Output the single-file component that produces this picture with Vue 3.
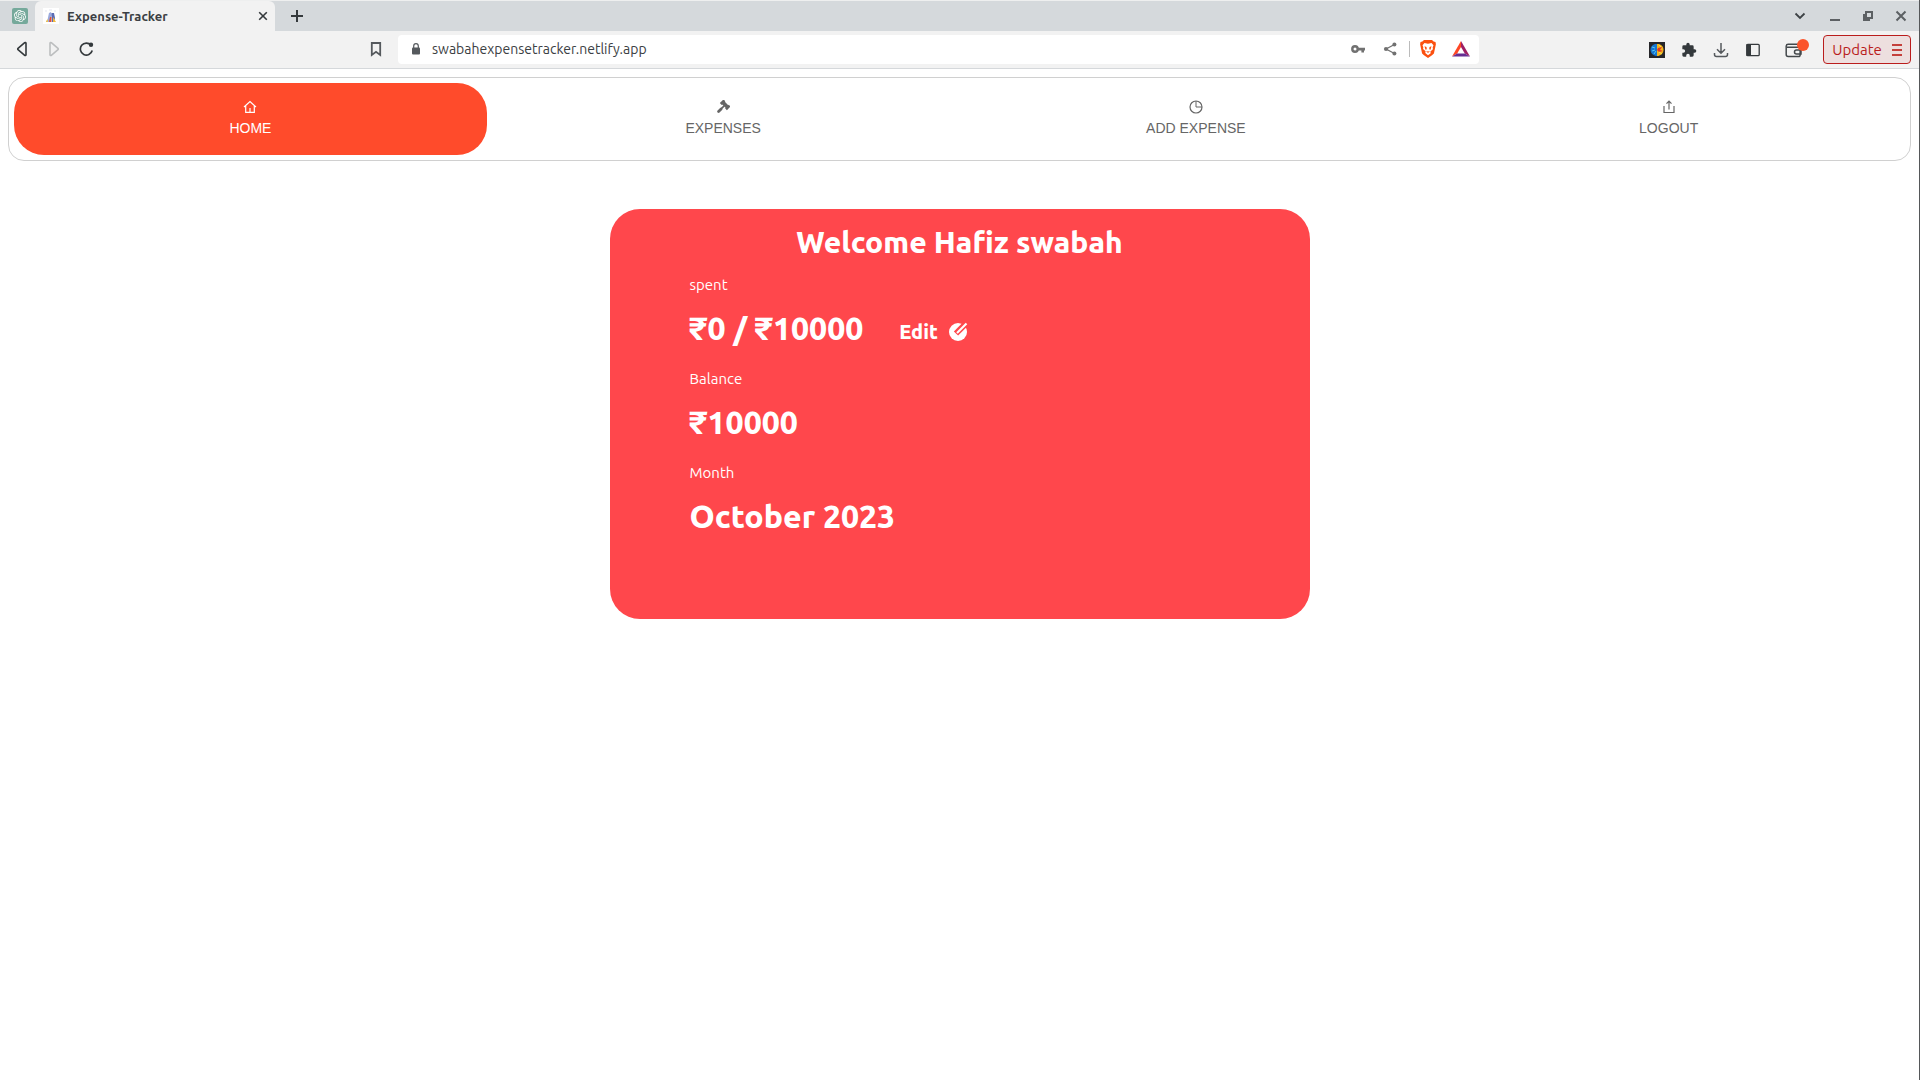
<script setup>
import { ref } from 'vue'

const active = ref('HOME')
const links = [
  { label: 'HOME', icon: 'home' },
  { label: 'EXPENSES', icon: 'gavel' },
  { label: 'ADD EXPENSE', icon: 'pie' },
  { label: 'LOGOUT', icon: 'upload' },
]
</script>

<template>
  <div class="window">
    <header class="tabstrip">
      <button class="pinned" aria-label="Pinned tab">
        <svg width="16" height="16" viewBox="-4 -4 32 32">
          <rect x="-4" y="-4" width="32" height="32" rx="4" fill="#75a99b" />
          <path fill="#fff" d="M22.2819 9.8211a5.9847 5.9847 0 0 0-.5157-4.9108 6.0462 6.0462 0 0 0-6.5098-2.9A6.0651 6.0651 0 0 0 4.9807 4.1818a5.9847 5.9847 0 0 0-3.9977 2.9 6.0462 6.0462 0 0 0 .7427 7.0966 5.98 5.98 0 0 0 .511 4.9107 6.051 6.051 0 0 0 6.5146 2.9001A5.9847 5.9847 0 0 0 13.2599 24a6.0557 6.0557 0 0 0 5.7718-4.2058 5.9894 5.9894 0 0 0 3.9977-2.9001 6.0557 6.0557 0 0 0-.7475-7.0729zm-9.022 12.6081a4.4755 4.4755 0 0 1-2.8764-1.0408l.1419-.0804 4.7783-2.7582a.7948.7948 0 0 0 .3927-.6813v-6.7369l2.02 1.1686a.071.071 0 0 1 .038.052v5.5826a4.504 4.504 0 0 1-4.4945 4.4944zm-9.6607-4.1254a4.4708 4.4708 0 0 1-.5346-3.0137l.142.0852 4.783 2.7582a.7712.7712 0 0 0 .7806 0l5.8428-3.3685v2.3324a.0804.0804 0 0 1-.0332.0615L9.74 19.9502a4.4992 4.4992 0 0 1-6.1408-1.6464zM2.3408 7.8956a4.485 4.485 0 0 1 2.3655-1.9728V11.6a.7664.7664 0 0 0 .3879.6765l5.8144 3.3543-2.0201 1.1685a.0757.0757 0 0 1-.071 0l-4.8303-2.7865A4.504 4.504 0 0 1 2.3408 7.872zm16.5963 3.8558L13.1038 8.364 15.1192 7.2a.0757.0757 0 0 1 .071 0l4.8303 2.7913a4.4944 4.4944 0 0 1-.6765 8.1042v-5.6772a.79.79 0 0 0-.407-.667zm2.0107-3.0231l-.142-.0852-4.7735-2.7818a.7759.7759 0 0 0-.7854 0L9.409 9.2297V6.8974a.0662.0662 0 0 1 .0284-.0615l4.8303-2.7866a4.4992 4.4992 0 0 1 6.6802 4.66zM8.3065 12.863l-2.02-1.1638a.0804.0804 0 0 1-.038-.0567V6.0742a4.4992 4.4992 0 0 1 7.3757-3.4537l-.142.0805L8.704 5.459a.7948.7948 0 0 0-.3927.6813zm1.0976-2.3654l2.602-1.4998 2.6069 1.4998v2.9994l-2.5974 1.4997-2.6067-1.4997Z" />
        </svg>
      </button>
      <div class="tab">
        <svg width="16" height="16" viewBox="0 0 16 16">
          <rect width="16" height="16" fill="#fff" />
          <path d="M6 5l2-1 1 3-2 7H4z" fill="#9aa9dc" />
          <path d="M8.500 5H11l1 5-1 4H9z" fill="#5a6bb5" />
          <path d="M7 9h1.500v5H6z" fill="#d9523f" />
          <path d="M10 9l3 5h-3z" fill="#f0b93a" />
          <path d="M3 13l2-2v3H3z" fill="#e8c15a" />
          <path d="M2 3h2M6 2h3M11 3h2" stroke="#e3e5ee" />
        </svg>
        <span class="tab-title">Expense-Tracker</span>
        <button aria-label="Close tab">
          <svg width="10" height="10" viewBox="0 0 10 10"><path d="M1.2 1.2l7.6 7.6M8.8 1.2L1.2 8.8" stroke="#34393c" stroke-width="1.6" /></svg>
        </button>
      </div>
      <button class="new-tab" aria-label="New tab">
        <svg width="12" height="12" viewBox="0 0 12 12"><path d="M6 0v12M0 6h12" stroke="#34393c" stroke-width="2" /></svg>
      </button>
      <div class="controls">
        <button class="search-tabs" aria-label="Search tabs">
          <svg width="12" height="12" viewBox="0 0 12 12"><path d="M1.5 3.500L6 8l4.500-4.500" fill="none" stroke="#3d4245" stroke-width="1.800" /></svg>
        </button>
        <button aria-label="Minimize">
          <svg width="12" height="12" viewBox="0 0 12 12"><path d="M1 10h10" stroke="#5c6063" stroke-width="2" /></svg>
        </button>
        <button aria-label="Restore">
          <svg width="12" height="12" viewBox="0 0 12 12"><path d="M4 2h6v6H4zM2 4v6h6" fill="none" stroke="#5c6063" stroke-width="2" /></svg>
        </button>
        <button aria-label="Close">
          <svg width="12" height="12" viewBox="0 0 12 12"><path d="M1.500 1.500l9 9M10.500 1.500l-9 9" stroke="#5c6063" stroke-width="2" /></svg>
        </button>
      </div>
    </header>

    <div class="toolbar">
      <div class="nav-tools">
        <button aria-label="Back">
          <svg width="14" height="16" viewBox="0 0 14 16"><path d="M11 2.200v11.600a.8.8 0 0 1-1.300.5L3 8.600a.8.800 0 0 1 0-1.200l6.700-5.700a.8.8 0 0 1 1.300.5z" fill="none" stroke="#34393c" stroke-width="1.600" /></svg>
        </button>
        <button aria-label="Forward">
          <svg width="14" height="16" viewBox="0 0 14 16"><path d="M3 2.200v11.600a.8.8 0 0 0 1.300.5L11 8.600a.8.800 0 0 0 0-1.200L4.300 1.700A.8.8 0 0 0 3 2.200z" fill="none" stroke="#bcbebf" stroke-width="1.600" /></svg>
        </button>
        <button aria-label="Reload">
          <svg width="16" height="16" viewBox="0 0 16 16"><path d="M12 4.200A6 6 0 1 0 13.200 9.500" fill="none" stroke="#34393c" stroke-width="1.700" /><circle cx="12" cy="3.800" r="2.200" fill="#34393c" /></svg>
        </button>
        <button class="bookmark" aria-label="Bookmark">
          <svg width="12" height="16" viewBox="0 0 12 16"><path d="M1.800 2h8.400v12L6 10.800 1.800 14z" fill="none" stroke="#55595d" stroke-width="1.800" /></svg>
        </button>
      </div>
      <div class="address">
        <svg width="10" height="12" viewBox="0 0 10 12"><rect x="1" y="4.500" width="8" height="7" rx="1" fill="#55595d" /><path d="M2.700 5V3a2.300 2.300 0 0 1 4.600 0v2" fill="none" stroke="#55595d" stroke-width="1.200" /></svg>
        <input aria-label="Address" value="swabahexpensetracker.netlify.app" />
        <button aria-label="Saved passwords">
          <svg width="16" height="16" viewBox="0 0 16 16"><circle cx="4" cy="8" r="2.700" fill="none" stroke="#717171" stroke-width="2.400" /><path d="M7 6.700h7v2.800h-1V11.600h-2.600V9.500H7z" fill="#717171" /></svg>
        </button>
        <button aria-label="Share">
          <svg width="16" height="16" viewBox="0 0 16 16"><path d="M12.500 3.500L4 8l8.500 4.500" fill="none" stroke="#717171" stroke-width="1.300" /><g fill="#717171"><circle cx="12.400" cy="3.600" r="2" /><circle cx="4" cy="8" r="2.100" /><circle cx="12.400" cy="12.400" r="2" /></g></svg>
        </button>
        <span class="divider"></span>
        <button aria-label="Shields">
          <svg width="18" height="18" viewBox="0 0 18 18"><path d="M5 0h8l1.600 1.400 1.900.6.400 2.200-2 9.300L13 15.200 9 18l-4-2.800-1.900-1.700-2-9.300L1.500 2l1.900-.6z" fill="#fb5010" /><path d="M5.500 3L9 3.700l3.500-.7 2 2.300-.8 1.900.2 2-2.500 2.300.3 1.700L9 15.200l-2.700-2.300.3-1.700-2.500-2.300.2-1.700-.8-1.900z" fill="#fff" /><path d="M5.500 6.300l2 .8.300 2.200-1.300.4zM12.500 6.300l-2 .8-.3 2.200 1.300.4zM7 11l2 .6 2-.6-2 2z" fill="#fb5010" /></svg>
        </button>
        <button aria-label="Rewards">
          <svg width="18" height="18" viewBox="0 0 18 18"><path d="M9 1L0 16.500l5.200-3L9 7z" fill="#ff4724" /><path d="M9 1l9 15.500-5.200-3L9 7z" fill="#9e1f63" /><path d="M0 16.500h18l-5.200-3H5.200z" fill="#662d91" /></svg>
        </button>
      </div>
      <div class="extensions">
        <button aria-label="Brain extension">
          <svg width="16" height="16" viewBox="0 0 16 16"><rect width="16" height="16" fill="#26262a" /><path d="M8 2C4.500 1.500 1.500 4 1.500 8c.2 3.500 3 6 6.500 6z" fill="#1675d1" /><path d="M8 2c3.500-.5 6.500 2 6.500 6-.2 3.500-3 6-6.500 6z" fill="#f6b51e" /><path d="M9 6l4-1-2 3 3 1-4 1-2-2z" fill="#df3427" /><path d="M3 5l3 1M3 9l3-1M5 12l2-3" stroke="#5cc8ef" /><path d="M10 10l3 2M10 3l2 2" stroke="#f2e34c" /></svg>
        </button>
        <button aria-label="Extensions">
          <svg width="16" height="16" viewBox="0 0 24 24"><path d="M20.500 11H19V7a2 2 0 0 0-2-2h-4V3.500a2.500 2.500 0 0 0-5 0V5H4a2 2 0 0 0-2 2v3.800h1.500a2.700 2.700 0 0 1 0 5.400H2V20a2 2 0 0 0 2 2h3.800v-1.500a2.700 2.700 0 0 1 5.400 0V22H17a2 2 0 0 0 2-2v-4h1.500a2.500 2.500 0 0 0 0-5z" fill="#34393c" /></svg>
        </button>
        <button aria-label="Downloads">
          <svg width="16" height="16" viewBox="0 0 16 16"><path d="M8 1v10M4 7.300l4 4 4-4M1.500 11v1.500a2 2 0 0 0 2 2h9a2 2 0 0 0 2-2V11" fill="none" stroke="#55595d" stroke-width="1.500" /></svg>
        </button>
        <button aria-label="Sidebar">
          <svg width="16" height="16" viewBox="0 0 16 16"><rect x="1.800" y="2.300" width="12.400" height="11.400" rx="1" fill="none" stroke="#34393c" stroke-width="1.300" /><path d="M1.500 2h4.500v12H1.500z" fill="#34393c" /></svg>
        </button>
        <button class="wallet" aria-label="Wallet">
          <svg width="18" height="16" viewBox="0 0 18 16"><path d="M15 5V3.500A1.300 1.300 0 0 0 13.700 2.200H3.200A2 2 0 0 0 1.200 4v8.500a2 2 0 0 0 2 2h10.600a1.300 1.300 0 0 0 1.300-1.300V6.200a1 1 0 0 0-1-1H2M16 8h-4.500a2 2 0 0 0 0 4H16z" fill="none" stroke="#43484b" stroke-width="1.500" /></svg>
          <span class="dot"></span>
        </button>
        <button class="update">
          Update
          <svg width="10" height="14" viewBox="0 0 10 14"><path d="M0 2h10M0 7h10M0 12h10" stroke="#c5403c" stroke-width="2" /></svg>
        </button>
      </div>
    </div>

    <main>
      <nav>
        <a v-for="link in links" :key="link.label" href="#" :class="{ active: active === link.label }" @click.prevent="active = link.label">
          <svg v-if="link.icon === 'home'" width="14" height="14" viewBox="0 0 14 14"><path d="M1 7l6-5.400L13 7M2.700 6v6.400h8.600V6M7 12V8" fill="none" stroke="currentColor" stroke-width="1.200" /></svg>
          <svg v-else-if="link.icon === 'gavel'" width="14" height="14" viewBox="0 0 14 14" fill="currentColor">
            <g transform="translate(9.200 4.800) rotate(45)">
              <path d="M-5-2.600h2.600v.7h4.800v-.7H5v5.200H2.400v-.7h-4.800v.7H-5z" />
              <path d="M0 1.500v4" stroke="currentColor" stroke-width="1.600" />
              <path d="M0 5.800v3.600" stroke="currentColor" stroke-width="2.800" stroke-linecap="round" />
            </g>
          </svg>
          <svg v-else-if="link.icon === 'pie'" width="14" height="14" viewBox="0 0 14 14"><circle cx="7" cy="7" r="6" fill="none" stroke="currentColor" stroke-width="1.200" /><path d="M7 1v6h6" fill="none" stroke="currentColor" stroke-width="1" /></svg>
          <svg v-else width="14" height="14" viewBox="0 0 14 14"><path d="M2 6v6.500h10V6M7 9.500V1.500M4.500 3.700L7 1.200l2.500 2.500" fill="none" stroke="currentColor" stroke-width="1.200" /></svg>
          <span>{{ link.label }}</span>
        </a>
      </nav>

      <section class="card">
        <h1>Welcome Hafiz swabah</h1>
        <dl>
          <dt>spent</dt>
          <dd>
            ₹0 / ₹10000
            <button class="edit">
              Edit
              <svg width="20" height="20" viewBox="0 0 20 20"><circle cx="10" cy="10" r="9" fill="#fff" /><path d="M19.500 0L8 11.500" stroke="#ff474c" stroke-width="6" /><path d="M18.500 1.500L10 10l-1 1" stroke="#fff" stroke-width="2.200" fill="none" /></svg>
            </button>
          </dd>
          <dt>Balance</dt>
          <dd>₹10000</dd>
          <dt>Month</dt>
          <dd>October 2023</dd>
        </dl>
      </section>
    </main>
  </div>
</template>

<style>
body {
  margin: 0;
  background: #fff;
}
</style>

<style scoped>
.window {
  box-sizing: border-box;
  min-height: 100vh;
  border-right: 1px solid #555759;
  font-family: Ubuntu, "Noto Sans", sans-serif;
}
button {
  display: flex;
  align-items: center;
  justify-content: center;
  padding: 0;
  border: 0;
  background: none;
  font: inherit;
  color: inherit;
}
svg {
  display: block;
  flex: none;
}
.tabstrip {
  display: flex;
  align-items: center;
  height: 30px;
  padding: 0 12px;
  border-top: 1px solid #eeefef;
  background: #d5d9dc;
}
.pinned {
  margin-right: 7px;
}
.tab {
  display: flex;
  align-items: center;
  box-sizing: border-box;
  width: 240px;
  height: 30px;
  padding: 0 7px 0 8px;
  border-radius: 6px 6px 0 0;
  background: #f2f2f2;
}
.tab-title {
  flex: 1;
  margin-left: 8px;
  font-size: 13px;
  font-weight: 600;
  color: #3b4043;
}
.new-tab {
  margin-left: 16px;
}
.controls {
  display: flex;
  gap: 21px;
  margin-left: auto;
}
.search-tabs {
  margin-right: 2px;
}
.toolbar {
  display: grid;
  grid-template-columns: 386px 1fr 432px;
  align-items: center;
  height: 37px;
  padding: 0 8px 0 12px;
  border-bottom: 1px solid #d5d8db;
  background: #f2f2f2;
}
.nav-tools {
  display: flex;
  align-items: center;
  gap: 18px;
  padding: 0 0 2px 3px;
}
.bookmark {
  margin: 0 16px 0 auto;
}
.address {
  display: flex;
  align-items: center;
  box-sizing: border-box;
  gap: 15px;
  height: 29px;
  padding: 0 9px 1px 13px;
  border-radius: 4px;
  background: #fff;
}
.address input {
  flex: 1;
  min-width: 0;
  padding: 0;
  margin-left: -4px;
  border: 0;
  outline: 0;
  background: none;
  font: inherit;
  font-size: 14px;
  color: #3b4043;
}
.divider {
  width: 1px;
  height: 16px;
  margin: 0 -6px 0 -4px;
  background: #bbb;
}
.extensions {
  display: flex;
  align-items: center;
  justify-content: flex-end;
  gap: 16px;
}
.wallet {
  position: relative;
  margin: 0 4px 0 8px;
}
.dot {
  position: absolute;
  top: -3px;
  right: -6px;
  width: 12px;
  height: 12px;
  border-radius: 6px;
  background: #fb542b;
}
.update {
  box-sizing: border-box;
  gap: 10px;
  width: 88px;
  height: 29px;
  border: 1px solid #ba1c1c;
  border-radius: 4px;
  background: #eddfdf;
  font-size: 15px;
  color: #ba1c1c;
}
main {
  padding: 8px;
}
nav {
  display: flex;
  padding: 5px;
  border: 1px solid #d0d0d0;
  border-radius: 16px;
}
nav a {
  display: flex;
  flex: 1;
  flex-direction: column;
  align-items: center;
  justify-content: center;
  box-sizing: border-box;
  gap: 6px;
  height: 72px;
  padding-bottom: 2px;
  border-radius: 30px;
  font: 14px/16px "Liberation Sans", sans-serif;
  color: #666;
  text-decoration: none;
}
nav a.active {
  background: #ff4b2b;
  color: #fff;
}
.card {
  box-sizing: border-box;
  max-width: 700px;
  min-height: 410px;
  margin: 48px auto 0;
  padding: 16px 80px;
  border-radius: 30px;
  background: #ff474c;
  color: #fff;
}
h1 {
  margin: 0 0 14px;
  font-size: 30px;
  font-weight: 800;
  line-height: 34px;
  text-align: center;
}
dl {
  margin: 0;
}
dt {
  font-size: 15px;
  line-height: 24px;
}
dd {
  display: flex;
  align-items: flex-end;
  gap: 36px;
  margin: 12px 0 20px;
  font-size: 32px;
  font-weight: 800;
  line-height: 38px;
}
.edit {
  gap: 10px;
  font-size: 20px;
  line-height: 30px;
}
</style>
